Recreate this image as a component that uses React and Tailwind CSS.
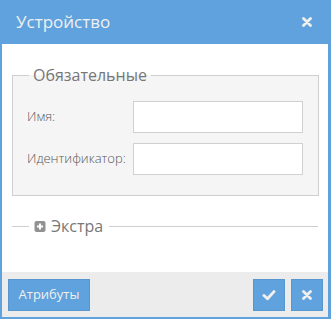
import React from "react";

const CloseIcon = ({ size = 10, color = "#f0f0f0" }) => (
  <svg width={size} height={size} viewBox="0 0 10 10">
    <path d="M1.5 1.5 L8.5 8.5 M8.5 1.5 L1.5 8.5" stroke={color} strokeWidth="2.8" strokeLinecap="round" />
  </svg>
);

const CheckIcon = () => (
  <svg width="14" height="12" viewBox="0 0 14 12">
    <path d="M2 6.5 L5.5 9.8 L12 2.6" stroke="#f0f0f0" strokeWidth="2.9" fill="none" strokeLinecap="round" strokeLinejoin="round" />
  </svg>
);

const PlusBox = () => (
  <svg width="12" height="11" viewBox="0 0 12 11">
    <rect x="0.5" y="0" width="11" height="11" rx="2" fill="#919191" />
    <path d="M6 2.5 V8.5 M3 5.5 H9" stroke="#ffffff" strokeWidth="2" />
  </svg>
);

const Field = ({ label }) => (
  <div className="flex items-center">
    <label className="w-[106px] text-[13px] font-light text-[#555]">{label}</label>
    <input
      type="text"
      className="w-[170px] h-[32px] bg-white border border-[#d0d0d0] outline-none px-2 text-[13px]"
    />
  </div>
);

export default function App() {
  return (
    <div
      className="w-[331px] h-[319px] bg-[#5fa2dd] flex flex-col"
      style={{ fontFamily: "'Open Sans', 'Liberation Sans', sans-serif" }}
    >
      <div className="h-[44px] flex items-center justify-between pl-[16px] pr-[19px]">
        <span className="text-[17px] text-[#f0f0f0]">Устройство</span>
        <CloseIcon />
      </div>

      <div className="flex-1 flex flex-col ml-[2px] mr-[3px] mb-[2px] bg-white">
        <div className="flex-1 px-[10px] pt-[20px]">
          <fieldset className="border border-[#cfcfcf] bg-[#f5f5f5] pl-[14px] pr-[15px] pb-[20px]">
            <legend className="ml-[2px] px-[4px] text-[16px] leading-[22px] text-[#777]">Обязательные</legend>
            <div className="flex flex-col gap-[10px] pt-[15px]">
              <Field label="Имя:" />
              <Field label="Идентификатор:" />
            </div>
          </fieldset>

          <div className="flex items-center mt-[19px]">
            <div className="w-[17px] h-px bg-[#cfcfcf]" />
            <span className="ml-[5px] flex"><PlusBox /></span>
            <span className="ml-[5px] text-[16px] leading-[22px] text-[#777]">Экстра</span>
            <div className="ml-[6px] flex-1 h-px bg-[#cfcfcf]" />
          </div>
        </div>

        <div className="h-[45px] bg-[#ececec] flex items-start pt-[7px] pl-[6px] pr-[5px]">
          <button className="w-[82px] h-[32px] bg-[#5fa2dd] border border-[#5897ce] text-[13px] text-[#f0f0f0]">
            Атрибуты
          </button>
          <div className="ml-auto flex gap-[6px]">
            <button className="w-[32px] h-[32px] bg-[#5fa2dd] border border-[#5897ce] flex items-center justify-center">
              <CheckIcon />
            </button>
            <button className="w-[32px] h-[32px] bg-[#5fa2dd] border border-[#5897ce] flex items-center justify-center">
              <CloseIcon />
            </button>
          </div>
        </div>
      </div>
    </div>
  );
}
